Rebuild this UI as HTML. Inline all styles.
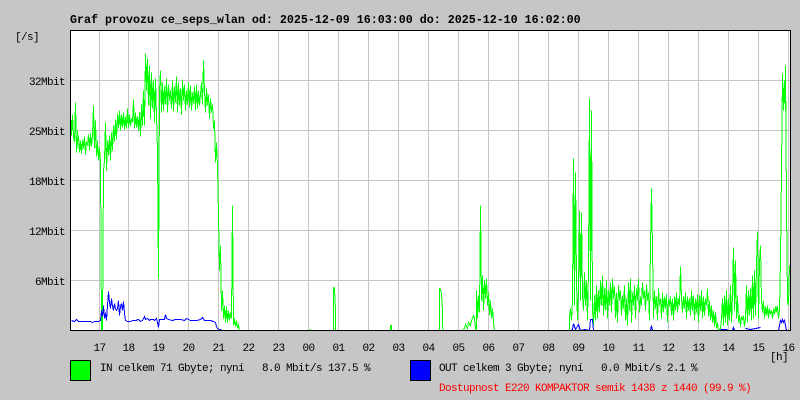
<!DOCTYPE html>
<html><head><meta charset="utf-8"><style>
html,body{margin:0;padding:0;background:#c6c6c6}
body{width:800px;height:400px;position:relative;overflow:hidden}
svg{position:absolute;left:0;top:0}
.t{font-family:"Liberation Mono",monospace;font-size:11px;letter-spacing:-0.6px;fill:#000;white-space:pre}
.b{font-family:"Liberation Mono",monospace;font-size:11.67px;font-weight:bold;fill:#000;white-space:pre}
</style></head><body>
<svg width="800" height="400" xmlns="http://www.w3.org/2000/svg">
<rect x="70" y="30" width="720" height="300" fill="#fff"/>
<g shape-rendering="crispEdges" stroke="#c6c6c6" stroke-width="1" fill="none">
<path d="M70.5 80.5H790M70.5 130.5H790M70.5 180.5H790M70.5 230.5H790M70.5 280.5H790"/>
<path d="M99.5 30V330M128.5 30V330M158.5 30V330M188.5 30V330M218.5 30V330M248.5 30V330M278.5 30V330M308.5 30V330M338.5 30V330M368.5 30V330M398.5 30V330M428.5 30V330M458.5 30V330M488.5 30V330M518.5 30V330M548.5 30V330M578.5 30V330M608.5 30V330M638.5 30V330M668.5 30V330M698.5 30V330M728.5 30V330M758.5 30V330M788.5 30V330"/>
</g>
<g transform="translate(.5 .5)" shape-rendering="crispEdges" fill="none" stroke="#00ff00" stroke-width="1" stroke-linejoin="miter">
<polyline points="70,115 71,135 72,114 73,136 74,142 75,102 76,152 77,130 76,150 78,135 79,152 80,140 81,153 82,139 83,148 84,136 85,154 86,141 87,145 88,134 89,150 90,133 91,146 92,135 93,105 94,148 95,120 96,156 97,140 98,160 99,147 100,162 101,330 102,330 103,170 104,160 105,122 106,170 107,140 108,155 109,135 110,160 111,132 112,150 113,125 114,141 115,119 116,139 117,113 118,128 119,110 120,130 121,114 122,127 123,112 124,129 125,116 126,128 127,108 128,127 129,114 130,126 131,118 132,122 133,99 134,128 135,112 136,127 137,116 138,130 139,112 140,136 141,104 142,125 143,90 144,125 145,53 146,90 147,58 148,105 149,65 150,118 151,72 152,108 153,80 154,122 155,78 156,115 157,150 158,278 159,90 160,70 161,112 162,82 163,110 164,86 165,104 166,78 167,112 168,84 169,100 170,90 171,108 172,80 173,111 174,86 175,102 176,76 177,112 178,82 179,105 180,88 181,114 182,80 183,100 184,84 185,110 186,90 187,104 188,82 189,107 190,85 191,110 192,92 193,103 194,86 195,110 196,84 197,108 198,90 199,105 200,94 201,82 202,104 203,60 204,90 205,112 206,88 207,105 208,94 209,118 210,98 211,112 212,104 213,128 214,120 215,162 216,142 217,165 218,215 219,270 220,245 221,310 222,290 223,318 224,305 225,322 226,306 227,322 228,310 229,320 230,312 231,318 232,205 233,325 234,318 235,326 236,320 237,328 238,324 239,330 241,330"/>
<polyline points="309,329 310,329"/>
<polyline points="333,330 333,287 334,288 335,310 335,330"/>
<polyline points="390,330 390,325 391,325 391,330"/>
<polyline points="439,330 439,288 440,289 441,293 442,310 442,325 443,330 446,330"/>
<polyline points="462,329 464,328 465,324 467,328 468,322 470,325 471,320 473,315 474,318 475,328 476,330 476,290 477,318 478,295 479,312 480,205 481,300 482,275 483,310 484,280 485,298 486,278 487,305 488,292 489,315 490,300 491,318 492,308 493,322 494,330"/>
<polyline points="569,330 569,315 570,308 571,320 572,300 573,158 574,305 575,172 576,280 577,320 578,290 579,210 580,300 581,212 582,295 583,310 584,272 585,305 586,280 587,320 588,270 589,98 590,300 591,110 592,310 593,325 594,295 595,320 596,285 597,318 598,290 599,312 600,280 601,305 602,275 603,315 604,288 605,310 606,280 607,318 608,290 609,305 610,282 611,312 612,278 613,298 614,286 615,318 616,292 617,322 618,285 619,300 620,290 621,315 622,295 623,308 624,285 625,320 626,298 627,325 628,282 629,310 630,278 631,322 632,292 633,305 634,285 635,318 636,288 637,300 638,278 639,312 640,296 641,305 642,282 643,298 644,290 645,310 646,284 647,300 648,292 649,320 650,245 651,188 652,248 653,318 654,290 655,308 656,296 657,320 658,288 659,305 660,298 661,318 662,292 663,312 664,296 665,308 666,294 667,322 668,298 669,306 670,296 671,315 672,298 673,320 674,296 675,310 676,292 677,312 678,298 679,305 680,266 681,298 682,312 683,296 684,308 685,292 686,318 687,296 688,310 689,298 690,315 691,290 692,310 693,295 694,320 695,298 696,312 697,294 698,322 699,295 700,310 701,290 702,318 703,296 704,315 705,298 706,305 707,288 708,316 709,300 710,320 711,305 712,322 713,310 714,326 715,312 716,328 717,322 718,330 720,328 721,318 722,298 723,325 724,295 725,322 726,290 727,325 728,298 729,320 730,285 731,322 732,295 733,247 734,310 735,260 736,318 737,295 738,322 739,314 740,326 741,316 742,320 743,315 744,326 745,318 746,285 747,322 748,290 749,315 750,288 751,320 752,275 753,318 754,270 755,315 756,265 757,231 758,318 759,262 760,245 761,300 762,312 763,300 764,318 765,306 766,315 767,305 768,318 769,308 770,314 771,310 772,318 773,308 774,314 775,306 776,312 777,305 778,318 779,310 780,260 781,170 782,73 783,110 784,80 785,110 785,65 786,205 787,300 788,305 789,265"/>
</g>
<g transform="translate(.5 .5)" shape-rendering="crispEdges" fill="none" stroke="#0000ff" stroke-width="1">
<polyline points="71,320 74,321 76,319 78,321 90,321 92,322 94,321 98,321 100,320 101,310 102,316 103,305 104,318 105,312 106,320 107,305 108,291 109,302 110,308 111,298 112,306 113,310 114,303 115,308 116,310 117,308 118,300 119,315 120,306 121,303 122,310 123,301 124,313 125,320 127,321 130,321 132,320 135,320 138,319 140,321 142,320 144,316 145,319 147,318 149,320 150,319 153,319 154,320 156,318 157,322 158,327 159,319 164,319 165,314 166,318 168,319 172,320 175,319 180,319 184,320 186,318 190,320 196,320 200,319 202,317 204,320 210,320 213,321 215,322 216,326 217,328 219,329 222,330"/>
<polyline points="570,330 572,329 573,323 575,329 578,324 580,330 584,329 589,330 590,319 592,319 593,330"/>
<polyline points="650,330 651,325 652,330"/>
<polyline points="720,329 727,329"/>
<polyline points="732,330 733,327 734,330"/>
<polyline points="745,328 750,329 755,328 760,327"/>
<polyline points="778,330 780,320 781,322 782,319 783,322 784,320 786,330"/>
</g>
<g shape-rendering="crispEdges" fill="#000">
<rect x="70" y="30" width="721" height="1"/>
<rect x="70" y="330" width="721" height="1"/>
<rect x="70" y="30" width="1" height="301"/>
<rect x="790" y="30" width="1" height="301"/>
</g>
<text class="b" x="70" y="23">Graf provozu ce_seps_wlan od: 2025-12-09 16:03:00 do: 2025-12-10 16:02:00</text>
<text class="t" x="15" y="40">[/s]</text>
<g text-anchor="end">
<text class="t" x="65" y="85">32Mbit</text>
<text class="t" x="65" y="135">25Mbit</text>
<text class="t" x="65" y="185">18Mbit</text>
<text class="t" x="65" y="235">12Mbit</text>
<text class="t" x="65" y="285">6Mbit</text>
</g>
<g text-anchor="middle">
<text class="t" x="99.5" y="351">17</text><text class="t" x="128.5" y="351">18</text><text class="t" x="158.5" y="351">19</text><text class="t" x="188.5" y="351">20</text><text class="t" x="218.5" y="351">21</text><text class="t" x="248.5" y="351">22</text><text class="t" x="278.5" y="351">23</text><text class="t" x="308.5" y="351">00</text><text class="t" x="338.5" y="351">01</text><text class="t" x="368.5" y="351">02</text><text class="t" x="398.5" y="351">03</text><text class="t" x="428.5" y="351">04</text><text class="t" x="458.5" y="351">05</text><text class="t" x="488.5" y="351">06</text><text class="t" x="518.5" y="351">07</text><text class="t" x="548.5" y="351">08</text><text class="t" x="578.5" y="351">09</text><text class="t" x="608.5" y="351">10</text><text class="t" x="638.5" y="351">11</text><text class="t" x="668.5" y="351">12</text><text class="t" x="698.5" y="351">13</text><text class="t" x="728.5" y="351">14</text><text class="t" x="758.5" y="351">15</text><text class="t" x="788.5" y="351">16</text>
</g>
<text class="t" x="770" y="360">[h]</text>
<rect x="70.5" y="360.5" width="20" height="20" fill="#00ff00" stroke="#000" shape-rendering="crispEdges"/>
<rect x="410.5" y="360.5" width="20" height="20" fill="#0000ff" stroke="#000" shape-rendering="crispEdges"/>
<text class="t" x="100" y="371">IN celkem 71 Gbyte; nyní   8.0 Mbit/s 137.5 %</text>
<text class="t" x="439" y="371">OUT celkem 3 Gbyte; nyní   0.0 Mbit/s 2.1 %</text>
<text class="t" x="439" y="391" style="fill:#ff0000">Dostupnost E220 KOMPAKTOR semik 1438 z 1440 (99.9 %)</text>
</svg>
</body></html>
